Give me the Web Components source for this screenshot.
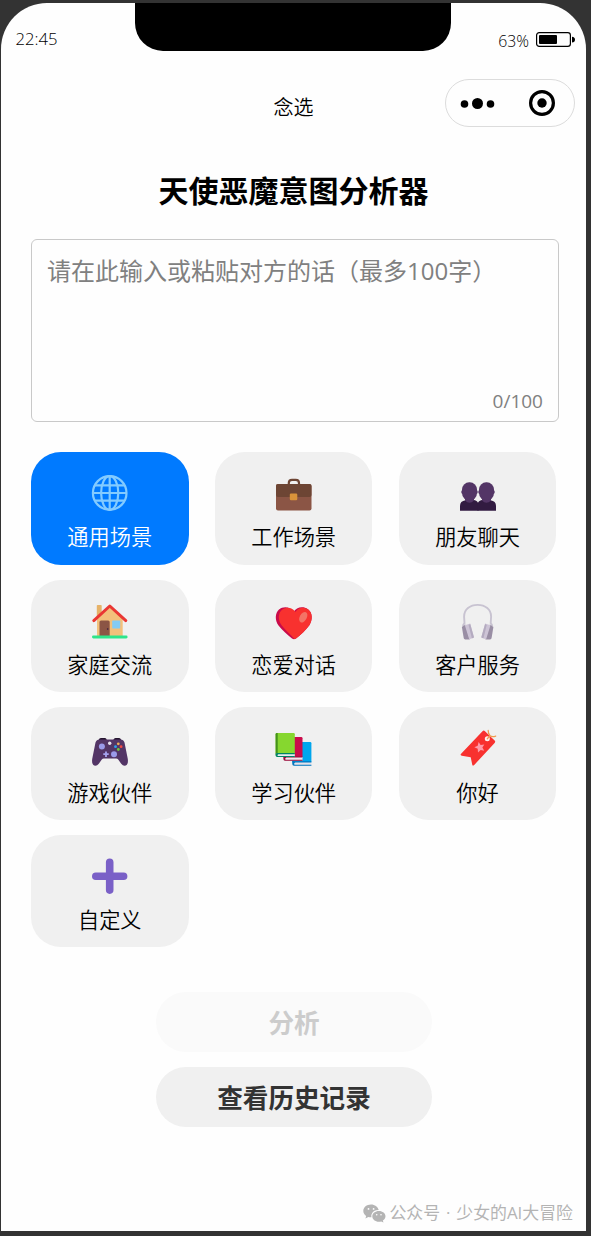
<!DOCTYPE html>
<html lang="zh-CN">
<head>
<meta charset="utf-8">
<title>念选</title>
<style>
html, body { margin: 0; height: 100%; background: #333; }
body { font-family: "Open Sans", "Noto Sans CJK SC", sans-serif; color: #000; overflow: hidden; }
</style>
</head>
<body>
<phone-frame>
  <status-bar slot="status" time="22:45" battery="63%"></status-bar>
  <nav-bar slot="nav">念选</nav-bar>
  <page-title>天使恶魔意图分析器</page-title>
  <text-input count="0/100">请在此输入或粘贴对方的话（最多100字）</text-input>
  <scene-grid>
    <scene-card icon="globe" active>通用场景</scene-card>
    <scene-card icon="briefcase">工作场景</scene-card>
    <scene-card icon="people">朋友聊天</scene-card>
    <scene-card icon="house">家庭交流</scene-card>
    <scene-card icon="heart">恋爱对话</scene-card>
    <scene-card icon="headphones">客户服务</scene-card>
    <scene-card icon="gamepad">游戏伙伴</scene-card>
    <scene-card icon="books">学习伙伴</scene-card>
    <scene-card icon="bookmark">你好</scene-card>
    <scene-card icon="plus">自定义</scene-card>
  </scene-grid>
  <pill-button disabled>分析</pill-button>
  <pill-button>查看历史记录</pill-button>
  <account-mark slot="mark">公众号 · 少女的AI大冒险</account-mark>
</phone-frame>
<script>
const define = (name, html) => customElements.define(name, class extends HTMLElement {
  constructor() {
    super();
    this.attachShadow({ mode: 'open' });
  }
  connectedCallback() {
    this.shadowRoot.innerHTML = typeof html === 'function' ? html(this) : html;
  }
});

const icons = {
  globe: `<g fill="none" stroke="#83cbff" stroke-width="2.200"><circle cx="17.700" cy="18" r="16.800"/><ellipse cx="17.700" cy="18" rx="8.600" ry="16.800"/><path d="M17.700 1v34M1 18h33.500M3 10.300h29.500M3 25.700h29.500"/></g>`,
  briefcase: `<path d="M12.800 10V8q0-3.200 3.200-3.200h3.800Q23 4.800 23 8v2" fill="none" stroke="#6d4534" stroke-width="2.200"/><rect y="9" width="35.500" height="26.500" rx="2" fill="#8b5545"/><path d="M0 11q0-2 2-2h31.500q2 0 2 2v9q0 2-2 2H2q-2 0-2-2z" fill="#6d4534"/><rect x="13.800" y="18.500" width="7.500" height="6.700" rx="1.200" fill="#d9933a"/>`,
  people: `<g fill="#321b41"><path d="M0 35.800V31Q0 26 5.500 25.200L10 24l5 1.200q3.500.8 3.500 5.800v4.800z"/><path d="M36 35.800V31q0-5-5.500-5.800L26 24l-5 1.200q-3.500.8-3.500 5.800v4.800z"/></g><g fill="#533566"><path d="M5 20h9v5.500q-4.500 4.600-9 0zM22 20h9v5.500q-4.500 4.600-9 0z"/><rect x="2" y="7.300" width="15" height="18" rx="7.200"/><rect x="19" y="7.300" width="15" height="18" rx="7.200"/><rect x="1.200" y="15" width="16.600" height="4" rx="2"/><rect x="18.200" y="15" width="16.600" height="4" rx="2"/></g>`,
  house: `<path d="M4.800 2.800q0-.8.800-.8h3.300q.8 0 .8.800V16H4.800z" fill="#e6b268"/><path d="M5 15.500 17.800 4 30.700 15.500V33H5z" fill="#f3c07b"/><path d="M7.500 19q0-1.500 1.500-1.500h7.200q1.500 0 1.500 1.500v14H7.500z" fill="#8b5545"/><circle cx="15.700" cy="26" r=".8" fill="#321b41"/><rect x="20.200" y="17.500" width="8" height="8" rx=".7" fill="#83cbf5"/><path d="M1.800 17.600 17.800 3l16 14.600" fill="none" stroke="#ea3733" stroke-width="3" stroke-linecap="round" stroke-linejoin="round"/><rect x="0" y="32.600" width="35.600" height="2.800" rx="1.400" fill="#2ee58a"/>`,
  heart: `<path d="M17.500 9C14 3 7 3 3 6.500-1 10-1.300 17 2.500 22.500 6 27 12 32 16 35.500q2 1.400 4 0C25 31.500 30 27 33.200 22.500 37 17 36.500 9.500 32 6.300 27 2.800 20.500 4 17.500 9z" fill="#ca0b4a"/><path d="M19.300 9C16 3.800 10 3.700 6 6.700 2 10 1.800 16.700 5.400 22 9 27 14 31 18.300 35.800q.7.300 1.700-.3C25 31.500 30 27 33.200 22.500 37 17 36.500 9.500 32 6.300 28 3.500 22.500 4.200 19.300 9z" fill="#f8312f"/><ellipse cx="27.300" cy="14.200" rx="3.500" ry="5.700" transform="rotate(28 27.300 14.200)" fill="#f37366"/>`,
  headphones: `<path d="M3 23.500q0-2 1.500-3.300l-.4-6.500C4 6.500 10 1.900 17.600 1.900S31.200 6.500 31.100 13.700l-.4 6.500q1.500 1.300 1.500 3.300" fill="none" stroke="#c8c3d1" stroke-width="1.900"/><path d="m1.900 24 3.600-2.500 4.300 14.900H5.200q-1.200 0-1.500-1.300z" fill="#998ea4"/><path d="m4.800 22.300 5.400-1.700 3.800 13.700-4.700 2.100z" fill="#cdc4d6"/><path d="m8.600 21.900 1.600-.8 3.800 13.500-2.100.8z" fill="#b4abc0"/><path d="m33.400 24-3.600-2.500-4.300 14.900h4.600q1.200 0 1.500-1.300z" fill="#998ea4"/><path d="m30.500 22.300-5.400-1.700-3.800 13.700 4.700 2.100z" fill="#cdc4d6"/><path d="m26.700 21.900-1.600-.8-3.800 13.500 2.100.8z" fill="#b4abc0"/>`,
  gamepad: `<path d="m6 11 1.500-2.500Q8 8 9 8h4q1.300 0 1.800 2l.4 1zM21 11l.5-1.400q.5-1.600 2-1.600h3.500q1 0 1.500.7L30 11z" fill="#25152f"/><path d="M7.500 9.500h21q3 0 4 3L35.800 29q.8 6.700-3.300 6.700-1.700 0-3.300-2l-3-4.200q-.8-1-2-1H11.800q-1.200 0-2 1l-3 4.200q-1.600 2-3.300 2Q-.6 35.700.2 29L3.500 12.500q1-3 4-3z" fill="#533566"/><circle cx="9.900" cy="16.500" r="3" fill="#9b9bea"/><circle cx="22" cy="24.200" r="3" fill="#9b9bea"/><path d="M14 21.500v5.400M11.300 24.200h5.400" stroke="#a6a4ef" stroke-width="1.800"/><circle cx="17.700" cy="13.300" r="1.700" fill="#e6e1ed"/><circle cx="26.300" cy="13.800" r="1.400" fill="#efad55"/><circle cx="23.500" cy="16.700" r="1.400" fill="#28a5ef"/><circle cx="29.100" cy="16.700" r="1.400" fill="#f34843"/><circle cx="26.300" cy="19.500" r="1.400" fill="#6dc640"/>`,
  books: `<rect x="16.200" y="12" width="19.200" height="21" rx="1.200" fill="#00a6ed"/><path d="M17 32h18.400v3.700H18q-1.700 0-1.700-1.700z" fill="#e4e2ea"/><path d="M16.300 30v4q0 1.700 1.700 1.700h17.400v-1H18.500q-1-1.500.8-2.200h16v-1.200H18z" fill="#0077be"/><rect x="7.500" y="7" width="19" height="21" rx="1.200" fill="#ca0b4a"/><path d="M8 27h18.500v3.700H9q-1.600 0-1.600-1.700z" fill="#f0e8ee"/><path d="M7.400 27v2q0 1.700 1.600 1.700h17.500v-1H9.500q-1-1.500.8-2.200h16v-1H9z" fill="#990838"/><rect x="-.4" y="3" width="19.200" height="21.500" rx="1.200" fill="#86d72f"/><path d="M-.4 4.300Q-.4 3 1 3h.7v21q-2 .3-2 2z" fill="#44911b"/><path d="M0 23.500h18.800v3.300H1q-1.400 0-1.400-1.500z" fill="#e9ebef"/><path d="M-.4 24v1.300q0 1.700 1.600 1.700h17.600v-1H1.800q-1-1.300.6-1.800h16.400V23H1.500q-1.900 0-1.900 1z" fill="#008463"/>`,
  bookmark: `<path d="M22.500 1.200q1.200-1.200 2.500 0l9.600 9.400q1.200 1.200 0 2.400L14.200 35q-1.600 1.400-2-.6l-1.500-7.200-8.900-1.500q-2-.5-.7-1.900z" fill="#f8312f"/><path d="m18.600 12 2 3 3.700-.5-1.900 3.100 1.800 3.100-3.500-.8-2.700 2.500-.3-3.600-3.300-1.500 3.300-1.500z" fill="#ff9aa8"/><circle cx="27.300" cy="8.800" r="2.500" fill="#fff1f0"/><path d="m27.300 8.800 2.800-3q-2-2-1.900-5.300M30.100 5.800q2.200 1.600 5.600.3" fill="none" stroke="#ef9b4e" stroke-width="1.300" stroke-linecap="round"/>`,
  plus: `<path d="M17.700 4.200v27.900M3.800 18.200h27.800" stroke="#7a60c7" stroke-width="7.600" stroke-linecap="round"/>`
};

define('phone-frame', `<style>
:host { display: block; height: 1236px; box-sizing: border-box; padding: 3px 5px 5px 1px; }
.screen { position: relative; display: flex; flex-direction: column; height: 1228px; background: #fefefe; border-radius: 46px 46px 0 0; }
.notch { position: absolute; left: 134px; top: 0; width: 316px; height: 48px; border-radius: 0 0 28px 28px; background: #000; }
main { flex: 1; display: flex; flex-direction: column; align-items: center; padding: 0 27px 0 30px; }
</style>
<div class="screen"><div class="notch"></div><slot name="status"></slot><slot name="nav"></slot><main><slot></slot></main><slot name="mark"></slot></div>`);

define('status-bar', el => `<style>
:host { display: flex; justify-content: space-between; height: 73px; padding: 0 11px 0 14.500px; font-weight: 350; }
.time { font-size: 16.700px; line-height: 24px; margin-top: 24px; }
.right { display: flex; align-items: flex-start; margin-top: 26px; }
.pct { font-size: 15.800px; line-height: 24px; margin-right: 7px; }
svg { display: block; margin-top: 3px; }
</style><span class="time">${el.getAttribute('time')}</span>
<span class="right"><span class="pct">${el.getAttribute('battery')}</span>
<svg width="39" height="15" viewBox="0 0 39 15"><rect x=".6" y=".6" width="33.800" height="13.800" rx="2.600" fill="none" stroke="#000" stroke-width="1.200"/><rect x="3" y="3" width="18" height="9" rx="1" fill="#000"/><path d="M36 4.800q3 .4 3 2.900t-3 2.900z"/></svg></span>`);

define('nav-bar', `<style>
:host { display: grid; grid-template-columns: 1fr auto 1fr; height: 54px; padding: 0 11px; align-items: center; }
.title { grid-column: 2; font-size: 20px; font-weight: 350; line-height: 30px; margin-top: 10px; }
.capsule { justify-self: end; align-self: start; margin-top: 3px; box-sizing: border-box; width: 130px; height: 48px; border: 1px solid #dcdcdc; border-radius: 24px; }
svg { display: block; }
</style><span class="title"><slot></slot></span>
<span class="capsule"><svg width="128" height="46" viewBox="0 0 128 46"><circle cx="18.500" cy="24" r="3.800"/><circle cx="31.500" cy="23.500" r="5.500"/><circle cx="44.500" cy="24" r="3.800"/><circle cx="96" cy="23" r="11.400" fill="none" stroke="#000" stroke-width="3.200"/><circle cx="96" cy="23" r="4.700"/></svg></span>`);

define('page-title', `<style>
:host { display: block; height: 109px; box-sizing: border-box; padding-top: 39px; margin-right: 3px; font-size: 30px; line-height: 44px; font-weight: 700; }
</style><slot></slot>`);

define('text-input', el => `<style>
:host { align-self: stretch; display: flex; flex-direction: column; justify-content: space-between; box-sizing: border-box; height: 183px; border: 1px solid #c9c9c9; border-radius: 6px; color: #808080; padding: 14px 15px 7px; }
.hint { font-size: 24px; line-height: 34px; white-space: nowrap; }
.count { align-self: flex-end; font-size: 19px; line-height: 26px; }
</style><span class="hint"><slot></slot></span><span class="count">${el.getAttribute('count')}</span>`);

define('scene-grid', `<style>
:host { align-self: stretch; display: grid; grid-template-columns: repeat(3, 157.500px); grid-auto-rows: 112.500px; gap: 15.100px 26.400px; margin: 30px 0 45px; }
</style><slot></slot>`);

define('scene-card', el => `<style>
:host { display: flex; flex-direction: column; align-items: center; box-sizing: border-box; padding-top: 23px; border-radius: 30px; background: #f0f0f0; font-size: 21.200px; font-weight: 350; line-height: 30px; }
:host([active]) { background: #007aff; color: #fff; }
svg { display: block; overflow: visible; margin-bottom: 11.400px; }
</style><svg width="36" height="36" viewBox="0 0 36 36">${icons[el.getAttribute('icon')]}</svg><slot></slot>`);

define('pill-button', `<style>
:host { display: flex; align-items: center; justify-content: center; box-sizing: border-box; width: 276px; height: 60px; margin: 0 2px 15px 0; padding-top: 4px; border-radius: 30px; background: #f0f0f0; color: #333; font-size: 25.600px; font-weight: 700; line-height: 36px; }
:host([disabled]) { background: #fafafa; color: #ccc; }
</style><slot></slot>`);

define('account-mark', `<style>
:host { display: flex; align-items: center; justify-content: flex-end; gap: 3px; padding: 0 13px 6px 0; height: 24px; font-size: 16.900px; line-height: 24px; color: #b4b4b4; white-space: nowrap; word-spacing: 1.500px; }
</style><svg width="23" height="19" viewBox="0 0 23 19"><path fill="#b4b4b4" d="M8 .5C3.700.5.300 3.300.300 6.900c0 2.100 1.200 3.800 2.900 5l-.8 2.500 2.900-1.500q1.500.4 3.200.3-.5-1.500.1-3C9.500 7.600 12.300 6 15.700 6.100 15 2.900 11.800.5 8 .5z"/><path fill="#b4b4b4" d="M15.900 6.900c-3.700 0-6.600 2.400-6.600 5.400 0 3.100 2.900 5.500 6.600 5.500q1.200 0 2.300-.4l2.300 1.200-.7-2c1.600-1 2.700-2.500 2.700-4.300 0-3-2.900-5.400-6.600-5.400z"/><g fill="#fefefe"><circle cx="5.500" cy="4.900" r=".9"/><circle cx="10.600" cy="4.900" r=".9"/><circle cx="13.700" cy="10.700" r=".8"/><circle cx="18" cy="10.700" r=".8"/></g></svg><span><slot></slot></span>`);
</script>
</body>
</html>
